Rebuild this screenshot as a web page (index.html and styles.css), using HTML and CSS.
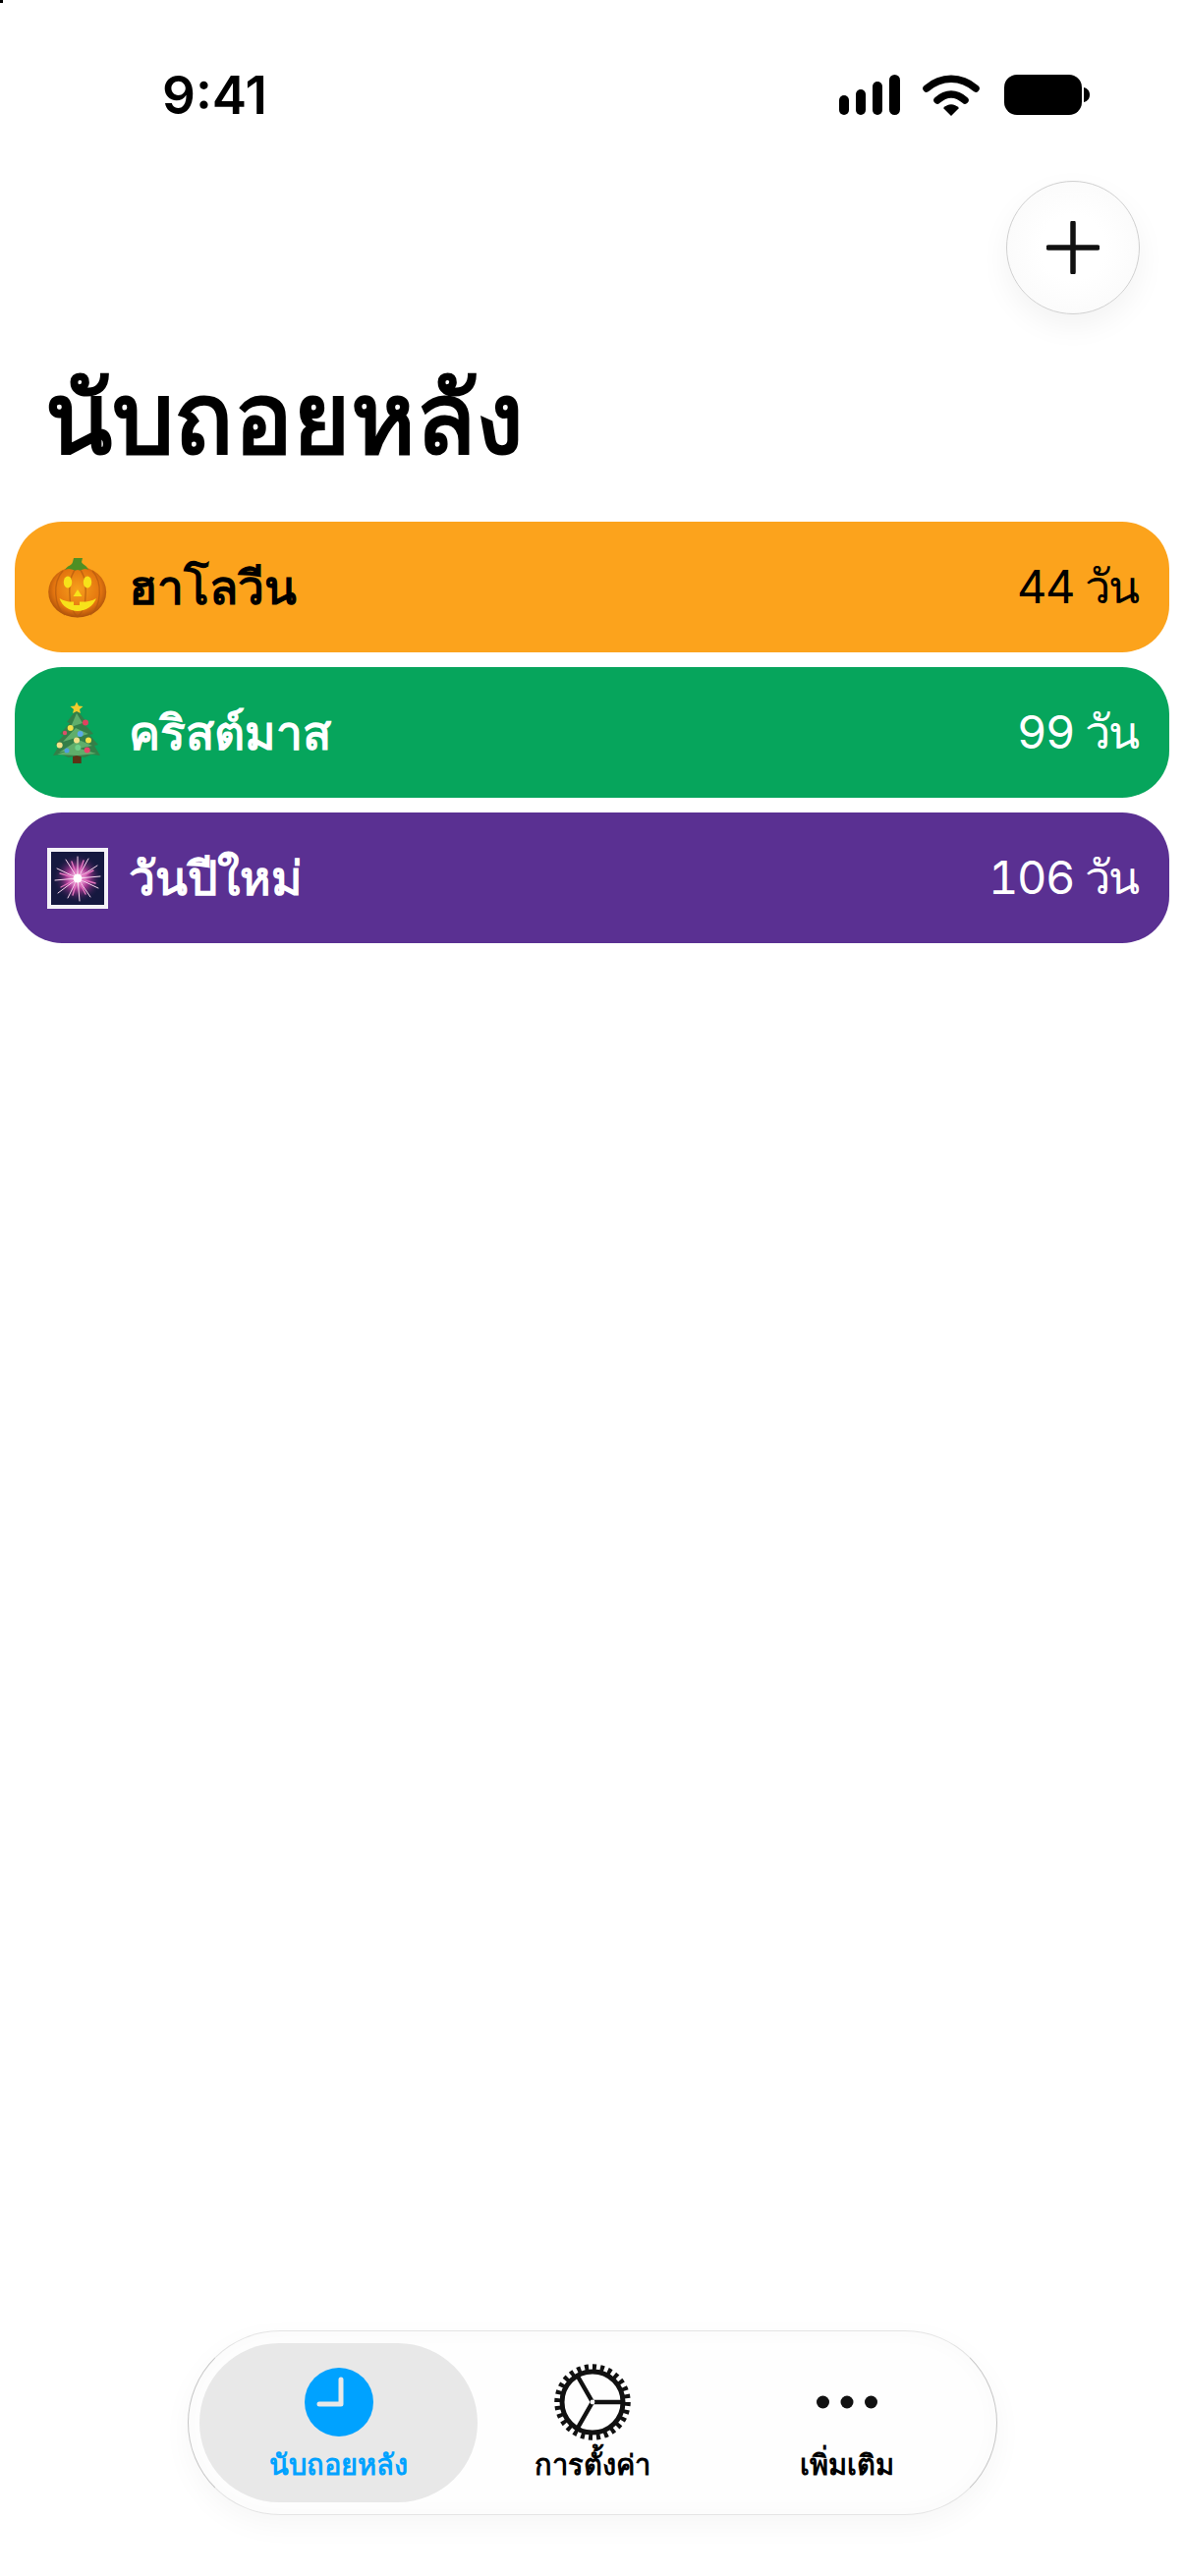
FILE: index.html
```html
<!DOCTYPE html>
<html lang="th">
<head>
  <meta charset="utf-8">
  <title>นับถอยหลัง</title>
  <link rel="stylesheet" href="styles.css">
</head>
<body>
  <div class="corner-mark"></div>
  <div class="status-bar">
    <span class="time">9:41</span>
    <div class="status-icons">
      <svg class="signal" width="62" height="41" viewBox="0 0 62 41">
        <rect x="0" y="21" width="10" height="20" rx="5"/>
        <rect x="17" y="15" width="10" height="26" rx="5"/>
        <rect x="34" y="7" width="10" height="34" rx="5"/>
        <rect x="51" y="0" width="11" height="41" rx="5.5"/>
      </svg>
      <svg class="wifi" width="58" height="42" viewBox="0 0 58 42">
        <path d="M4 14 C19 1 39 1 54 14" fill="none" stroke="#000" stroke-width="7.5" stroke-linecap="round"/>
        <path d="M15 26 C24 18 34 18 43 26" fill="none" stroke="#000" stroke-width="7.5" stroke-linecap="round"/>
        <path d="M21 34 C26 29 32 29 37 34 L29 42 Z"/>
      </svg>
      <svg class="battery" width="87" height="41" viewBox="0 0 87 41">
        <rect x="0" y="0" width="79" height="41" rx="13"/>
        <path d="M81 13 C85 14 87 17 87 20.5 C87 24 85 27 81 28 Z"/>
      </svg>
    </div>
  </div>

  <div class="toolbar">
    <button class="add-btn">
      <svg width="54" height="54" viewBox="0 0 54 54">
        <path d="M27 2 V52 M2 27 H52" stroke="#111" stroke-width="5.5" stroke-linecap="round"/>
      </svg>
    </button>
  </div>

  <h1 class="page-title">นับถอยหลัง</h1>

  <div class="event-list">
    <div class="event-row orange">
      <svg class="event-icon" viewBox="0 0 62 64">
        <defs>
          <radialGradient id="pumpkin" cx="50%" cy="45%" r="58%">
            <stop offset="0" stop-color="#f7a01c"/>
            <stop offset="0.7" stop-color="#e4750f"/>
            <stop offset="1" stop-color="#a04a0a"/>
          </radialGradient>
        </defs>
        <ellipse cx="30.7" cy="36.5" rx="29.5" ry="26" fill="url(#pumpkin)"/>
        <path d="M31 11 C20 20 20 52 31 62 M31 11 C42 20 42 52 31 62 M16 15 C5 27 7 51 18 60 M46 15 C57 27 55 51 44 60" fill="none" stroke="#b35a0e" stroke-width="1.4" opacity="0.7"/>
        <path d="M18 14 C21 9 25 10 26 6 L27 2 L36 2 L35 6 C36 9 40 9 42 14 C37 11 35 16 31 14 C27 16 24 11 18 14 Z" fill="#4f8f24"/>
        <ellipse cx="21" cy="26.5" rx="4.2" ry="6" fill="#f7e21a"/>
        <ellipse cx="41" cy="26.5" rx="4.2" ry="6" fill="#f7e21a"/>
        <path d="M31 34 L35.5 41 H26.5 Z" fill="#f7e21a"/>
        <path d="M12.5 43 C18 46 23 47 27 46.5 V50 H33 V46.5 C39 47 45 46 50 43 C47 51 39 56 31 56 C23 56 15 51 12.5 43 Z" fill="#f7e21a"/>
      </svg>
      <span class="event-name">ฮาโลวีน</span>
      <span class="event-days">44 วัน</span>
    </div>

    <div class="event-row green">
      <svg class="event-icon" viewBox="0 0 62 64">
        <rect x="26" y="53" width="8.7" height="10" fill="#5c3316"/>
        <path d="M30 8 L40 21 L37 22 L47 33 L43 34 L52 44 L48 45 L54 55 L45 54 L38 57 L30 55 L22 57 L15 54 L6 55 L12 45 L8 44 L17 34 L13 33 L23 22 L20 21 Z" fill="#337f48"/>
        <path d="M30 12 L36 22 L24 26 Z M29 27 L42 33 L16 41 Z M32 39 L46 45 L12 52 Z M10 54 L30 47 L50 53 L31 55 Z" fill="#5fae6b"/>
        <path d="M30 0.5 L32 4.5 L36.5 5 L33 8 L34 12 L30 10 L26 12 L27 8 L23.5 5 L28 4.5 Z" fill="#f5cb2c"/>
        <circle cx="39" cy="21.5" r="3" fill="#e0425f"/>
        <circle cx="23.7" cy="27" r="3" fill="#f3e24a"/>
        <circle cx="18" cy="32" r="2.2" fill="#d9506b"/>
        <circle cx="33.7" cy="33" r="3" fill="#5aa9e6"/>
        <circle cx="12.7" cy="44.5" r="3" fill="#f3e28a"/>
        <circle cx="30" cy="39.5" r="3" fill="#f3e28a"/>
        <circle cx="42" cy="39.5" r="3" fill="#f3e24a"/>
        <circle cx="20" cy="50" r="2.5" fill="#4f9fe0"/>
        <circle cx="31.3" cy="47" r="3" fill="#6fd08a"/>
        <circle cx="40.7" cy="49.5" r="3" fill="#e9476a"/>
      </svg>
      <span class="event-name">คริสต์มาส</span>
      <span class="event-days">99 วัน</span>
    </div>

    <div class="event-row purple">
      <svg class="event-icon" viewBox="0 0 62 62">
        <defs>
          <radialGradient id="burst" cx="50%" cy="50%" r="50%">
            <stop offset="0" stop-color="#fff"/>
            <stop offset="0.18" stop-color="#f6a6dc"/>
            <stop offset="0.45" stop-color="#a93a94"/>
            <stop offset="1" stop-color="#15183f" stop-opacity="0"/>
          </radialGradient>
        </defs>
        <rect x="0" y="0" width="62" height="62" fill="#f4f2f8"/>
        <rect x="4" y="4" width="54" height="54" fill="#15183f"/>
        <circle cx="31" cy="31" r="25" fill="url(#burst)"/>
        <g stroke="#f7d7ee" stroke-width="1" stroke-linecap="round">
          <path d="M31 31 L31 9 M31 31 L42 11 M31 31 L51 18 M31 31 L54 29 M31 31 L52 41 M31 31 L44 50 M31 31 L33 54 M31 31 L21 51 M31 31 L11 46 M31 31 L8 33 M31 31 L10 21 M31 31 L19 12"/>
          <path d="M31 31 L37 13 M31 31 L47 23 M31 31 L49 36 M31 31 L39 47 M31 31 L26 48 M31 31 L14 40 M31 31 L13 26 M31 31 L25 14" stroke="#e273bd" stroke-width="1.4"/>
        </g>
        <circle cx="31" cy="31" r="4.5" fill="#fff"/>
      </svg>
      <span class="event-name">วันปีใหม่</span>
      <span class="event-days">106 วัน</span>
    </div>
  </div>

  <nav class="tab-bar">
    <div class="tab-item active">
      <svg class="tab-icon" width="78" height="78" viewBox="0 0 78 78">
        <circle cx="39" cy="39" r="35" fill="#00a2ff"/>
        <path d="M41 16 V41 H19" fill="none" stroke="#e8e8e8" stroke-width="5" stroke-linecap="round" stroke-linejoin="round"/>
      </svg>
      <span class="tab-label">นับถอยหลัง</span>
    </div>
    <div class="tab-item">
      <svg class="tab-icon" width="78" height="78" viewBox="0 0 78 78">
        <circle cx="39" cy="39" r="35.5" fill="none" stroke="#111" stroke-width="6.5" pathLength="280" stroke-dasharray="5 5"/>
        <circle cx="39" cy="39" r="31" fill="none" stroke="#111" stroke-width="5"/>
        <path d="M39 39 H70 M39 39 L23.5 12 M39 39 L23.5 66" stroke="#111" stroke-width="4.5"/>
        <circle cx="39" cy="39" r="2.4" fill="#fff"/>
      </svg>
      <span class="tab-label">การตั้งค่า</span>
    </div>
    <div class="tab-item">
      <svg class="tab-icon" width="78" height="78" viewBox="0 0 78 78">
        <circle cx="14.5" cy="39" r="6.5" fill="#111"/>
        <circle cx="39" cy="39" r="6.5" fill="#111"/>
        <circle cx="63.5" cy="39" r="6.5" fill="#111"/>
      </svg>
      <span class="tab-label">เพิ่มเติม</span>
    </div>
  </nav>
</body>
</html>
```

FILE: styles.css
```css
html, body {
  margin: 0;
  padding: 0;
}
body {
  width: 1206px;
  height: 2622px;
  background-color: #fff;
  font-family: 'Inter', 'Noto Sans', sans-serif;
  color: #000;
  display: flex;
  flex-direction: column;
  overflow: hidden;
  position: relative;
}
.corner-mark {
  position: absolute;
  top: 0;
  left: 0;
  width: 3px;
  height: 3px;
  background-color: #000;
}
.status-bar {
  height: 118px;
  padding: 72px 97px 0 165px;
  box-sizing: border-box;
  display: flex;
  justify-content: space-between;
  align-items: flex-start;
}
.time {
  font-size: 53px;
  font-weight: 600;
  line-height: 50px;
}
.status-icons {
  display: flex;
  gap: 23px;
  margin-top: 4px;
  align-items: flex-start;
}
.wifi {
  margin-right: 2px;
}
.toolbar {
  display: flex;
  justify-content: flex-end;
  padding: 66px 46px 0 0;
}
.add-btn {
  width: 136px;
  height: 136px;
  border-radius: 50%;
  border: 1.5px solid #d0d0d0;
  background: radial-gradient(circle, #fff 35%, #f8f8f8 100%);
  box-shadow: 0 12px 30px rgba(0, 0, 0, 0.05);
  display: flex;
  align-items: center;
  justify-content: center;
  padding: 0;
}
.page-title {
  font-size: 100px;
  font-weight: 700;
  margin: 40px 0 41px 46px;
  line-height: 130px;
}
.event-list {
  display: flex;
  flex-direction: column;
  gap: 15px;
  margin: 0 16px 0 15px;
}
.event-row {
  height: 133px;
  border-radius: 48px;
  padding: 0 31px 0 33px;
  display: flex;
  align-items: center;
}
.orange {
  background-color: #fca31c;
  color: #000;
}
.green {
  background-color: #06a55c;
  color: #fff;
}
.purple {
  background-color: #5a3092;
  color: #fff;
}
.event-icon {
  width: 62px;
  height: 64px;
  margin-right: 21px;
  flex: none;
}
.event-name {
  font-size: 48px;
  font-weight: 700;
}
.event-days {
  margin-left: auto;
  font-size: 47px;
  font-weight: 400;
  letter-spacing: -1.5px;
  font-variant-numeric: tabular-nums;
}
.tab-bar {
  margin: auto 191px 62px 191px;
  height: 188px;
  box-sizing: border-box;
  border: 1.5px solid;
  border-color: #e4e4e4 #c6c6c6;
  border-radius: 94px;
  padding: 12px 11px;
  background-color: #fefefe;
  box-shadow: 0 10px 30px rgba(0, 0, 0, 0.04), inset 0 0 24px rgba(0, 0, 0, 0.025);
  display: grid;
  grid-template-columns: 283px 1fr 283px;
}
.tab-item {
  border-radius: 81px;
  display: flex;
  flex-direction: column;
  align-items: center;
  padding-top: 21px;
}
.tab-item.active {
  background-color: #e8e8e8;
  color: #00a2ff;
}
.tab-label {
  font-size: 29px;
  font-weight: 700;
  line-height: 40px;
  margin-top: 5px;
  white-space: nowrap;
}
```
